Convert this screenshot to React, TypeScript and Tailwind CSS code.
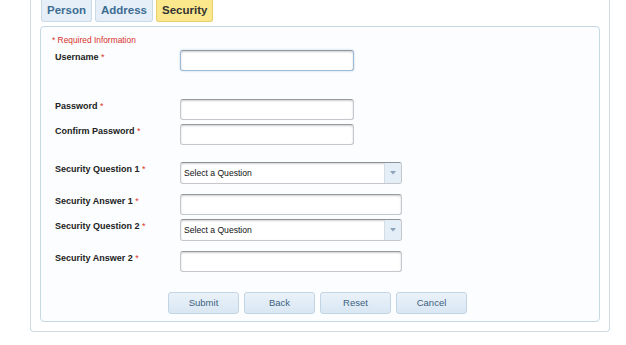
import { ReactNode } from "react";

const Label = ({ children }: { children: ReactNode }) => (
  <div className="w-[128px] pl-[3px] pt-[1px] text-[9px] leading-[12px] font-bold text-[#222]">
    {children} <span className="text-[#e0342f] font-normal">*</span>
  </div>
);

const TextInput = ({ wide, focused }: { wide?: boolean; focused?: boolean }) => (
  <div
    className={`h-[21px] rounded-[3px] bg-white border ${
      wide ? "w-[222px]" : "w-[174px]"
    } ${
      focused
        ? "border-[#9dbbd6] border-t-[#8f9aa4] shadow-[inset_0_1px_2px_rgba(0,0,0,0.2),0_0_2px_rgba(120,160,200,0.5)]"
        : "border-[#c4c8cc] border-t-[#979ba0] shadow-[inset_0_1px_2px_rgba(0,0,0,0.2)]"
    }`}
  />
);

const SelectBox = () => (
  <div className="flex h-[22px] w-[222px] rounded-[3px] bg-white border border-[#c4c8cc] border-t-[#8e9296] shadow-[inset_0_1px_2px_rgba(0,0,0,0.18)] overflow-hidden">
    <div className="flex-1 flex items-center pl-[3px] text-[8.6px] text-[#111]">Select a Question</div>
    <div className="w-[17px] flex items-center justify-center bg-[#e4eef6] border-l border-[#d3dee7]">
      <svg width="6" height="4" viewBox="0 0 6 4">
        <path d="M0 0 L6 0 L3 3.5 Z" fill="#8aa4bb" />
      </svg>
    </div>
  </div>
);

const Row = ({ label, children, mt }: { label: string; children: ReactNode; mt: string }) => (
  <div className={`flex items-start ${mt}`}>
    <Label>{label}</Label>
    {children}
  </div>
);

const Tab = ({ label, active }: { label: string; active?: boolean }) => (
  <div
    className={`h-[22px] flex items-center justify-center px-[5px] rounded-b-[3px] border border-t-0 text-[11.5px] font-bold ${
      active
        ? "bg-[#fbe88c] border-[#ead06a] text-[#333]"
        : "bg-[#e6eff7] border-[#c9dae7] text-[#3c6c92]"
    }`}
  >
    {label}
  </div>
);

const Btn = ({ label }: { label: string }) => (
  <button className="w-[71px] h-[22px] rounded-[3px] border border-[#c3d5e4] bg-gradient-to-b from-[#eaf2f9] to-[#d9e7f3] text-[9.5px] text-[#3e5f80]">
    {label}
  </button>
);

export default function App() {
  return (
    <div
      className="w-[626px] h-[345px] bg-white overflow-hidden"
      style={{ fontFamily: '"Liberation Sans", Arial, sans-serif' }}
    >
      <div className="ml-[30px] w-[580px] h-[332px] border-x border-b border-[#cddbe4] rounded-b-[4px] bg-white px-[9px]">
        <div className="flex gap-[3px] pl-[1px]">
          <Tab label="Person" />
          <Tab label="Address" />
          <Tab label="Security" active />
        </div>
        <div className="mt-[4px] h-[296px] border border-[#c8d8e3] rounded-[4px] bg-[#fbfdfe] pl-[11px] pt-[7px]">
          <div className="text-[8.4px] leading-[12px] text-[#d9322b]">* Required Information</div>
          <Row label="Username" mt="mt-[4px]">
            <TextInput focused />
          </Row>
          <Row label="Password" mt="mt-[28px]">
            <TextInput />
          </Row>
          <Row label="Confirm Password" mt="mt-[4px]">
            <TextInput />
          </Row>
          <Row label="Security Question 1" mt="mt-[17px]">
            <SelectBox />
          </Row>
          <Row label="Security Answer 1" mt="mt-[10px]">
            <TextInput wide />
          </Row>
          <Row label="Security Question 2" mt="mt-[4px]">
            <SelectBox />
          </Row>
          <Row label="Security Answer 2" mt="mt-[10px]">
            <TextInput wide />
          </Row>
          <div className="flex gap-[5px] mt-[20px] ml-[116px]">
            <Btn label="Submit" />
            <Btn label="Back" />
            <Btn label="Reset" />
            <Btn label="Cancel" />
          </div>
        </div>
      </div>
    </div>
  );
}
